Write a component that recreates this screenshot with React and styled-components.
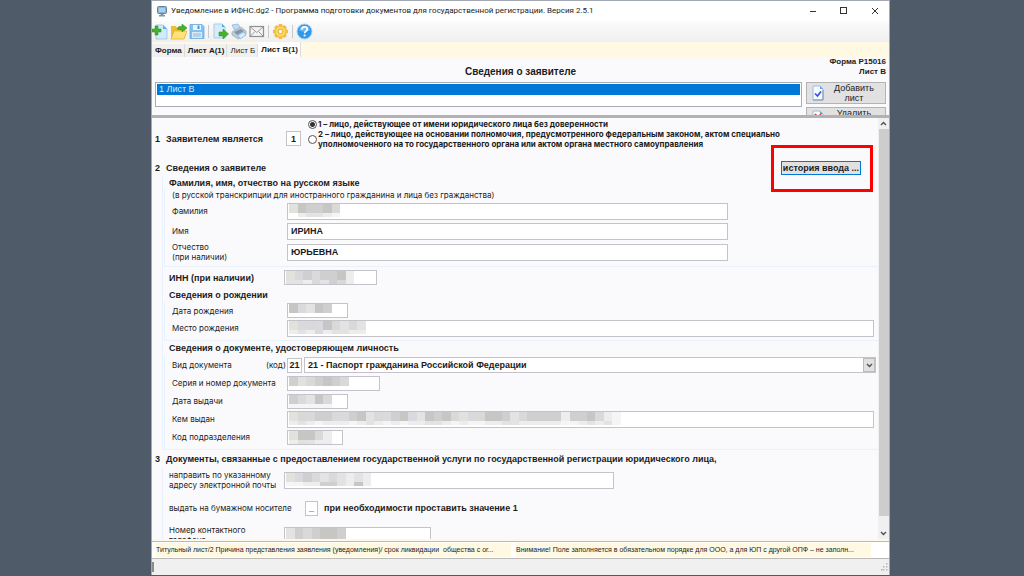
import { useState } from "react";
import styled, { createGlobalStyle, css } from "styled-components";

const GlobalStyle = createGlobalStyle`
  * {
    box-sizing: border-box;
  }
  body {
    margin: 0;
    background-color: #4f5b69;
    font-family: "Liberation Sans", Arial, sans-serif;
    font-size: 8px;
    line-height: 10px;
    color: #1c1c1c;
  }
  button,
  input,
  select {
    margin: 0;
    font-family: inherit;
    color: inherit;
  }
  p,
  h1,
  h2,
  h3 {
    margin: 0;
  }
`;

const Desktop = styled.div`
  display: flex;
  height: 100vh;
  padding: 0 134px 1px 151px;
  background-color: #4f5b69;
`;
const WindowStyle = styled.div`
  flex: 1;
  min-width: 0;
  display: flex;
  flex-direction: column;
  border: 1px solid #a2a8b4;
  border-width: 1px 1px 0 1px;
  background-color: #fafafc;
`;

const TitleBar = styled.header`
  display: flex;
  align-items: center;
  height: 20px;
  padding-left: 5px;
  gap: 4px;
  background-color: #ffffff;
`;
const TitleText = styled.h1`
  flex: 1;
  font-family: Roboto, "Noto Sans", sans-serif;
  font-size: 8px;
  line-height: 12px;
  font-weight: 400;
  white-space: nowrap;
`;
const WindowButton = styled.button`
  display: flex;
  align-items: center;
  justify-content: center;
  width: 27px;
  height: 18px;
  padding: 0;
  border: none;
  background: none;
`;
const WindowButtons = styled.div`
  display: flex;
  gap: 4px;
  padding-right: 1px;
`;

const Toolbar = styled.nav`
  display: flex;
  align-items: center;
  height: 21px;
  gap: 1px;
  background: linear-gradient(#fbfbfb, #efefef);
`;
const ToolButton = styled.button`
  display: flex;
  width: 17px;
  height: 17px;
  padding: 0;
  border: none;
  background: none;
`;
const ToolDivider = styled.span`
  width: 1px;
  height: 13px;
  margin: 0 2px;
  background-color: #c9c9c9;
`;

const TabStrip = styled.div`
  display: flex;
  align-items: flex-end;
  height: 15px;
  background-color: #fff9e3;
`;
const Tab = styled.button`
  height: 13px;
  padding: 0 2px 0 3px;
  border: none;
  border-right: 1px solid #dcdcdc;
  background-color: #f0f0f0;
  font-size: 8px;
  line-height: 13px;
  font-weight: ${(props) => (props.$filled ? 700 : 400)};
  ${(props) =>
    props.$active &&
    css`
      height: 15px;
      background-color: #ffffff;
    `}
`;

const SheetHeader = styled.section`
  height: 58px;
  padding: 0 3px;
  overflow: hidden;
`;
const SheetTitle = styled.div`
  display: grid;
  grid-template-columns: 1fr auto 1fr;
  height: 25px;
  font-weight: 700;
`;
const SheetName = styled.h2`
  grid-column: 2;
  align-self: center;
  padding-top: 4px;
  font-size: 10px;
  line-height: 12px;
`;
const FormCode = styled.p`
  text-align: right;
`;
const SheetBody = styled.div`
  display: grid;
  grid-template-columns: 1fr 80px;
  gap: 4px;
  align-items: start;
`;
const SheetList = styled.ul`
  height: 25px;
  margin: 0;
  padding: 1px;
  border: 1px solid #a9acb5;
  background-color: #ffffff;
  list-style: none;
`;
const SheetItem = styled.li`
  padding-left: 2px;
  background-color: #0078d7;
  color: #d8ecff;
  font-size: 9px;
  line-height: 11px;
`;
const SheetActions = styled.div`
  display: flex;
  flex-direction: column;
  gap: 3px;
`;
const SheetButton = styled.button`
  display: flex;
  align-items: center;
  height: 22px;
  padding: 0 2px 0 4px;
  border: 1px solid #b4b4b6;
  background-color: #e1e1e1;
  font-size: 9px;
  line-height: 10px;

  span {
    flex: 1;
    padding: 0 8px;
  }
`;

const FormArea = styled.main`
  flex: 1;
  min-height: 0;
  display: flex;
  border-top: 3px solid #b2b2b4;
`;
const FormContent = styled.form`
  position: relative;
  flex: 1;
  min-width: 0;
  overflow: hidden;
`;
const ScrollBar = styled.div`
  display: flex;
  flex-direction: column;
  align-items: center;
  width: 11px;
  background-color: #f0f0f0;
`;
const ScrollArrow = styled.button`
  display: flex;
  align-items: center;
  justify-content: center;
  width: 11px;
  height: 11px;
  padding: 0;
  border: none;
  background: none;
`;
const ScrollThumb = styled.div`
  width: 10px;
  height: 92%;
  margin-bottom: auto;
  background-color: #cdcdcd;
`;

const ApplicantRow = styled.div`
  display: grid;
  grid-template-columns: 11px 120px 15px 1fr;
  align-items: center;
  height: 41px;
  padding-left: 3px;
  font-size: 9px;
  font-weight: 700;
`;
const Options = styled.div`
  align-self: start;
  padding: 1px 0 0 7px;
`;
const Option = styled.label`
  display: flex;
  align-items: center;
  gap: 1px;
  max-width: 500px;
  font-family: Inter, "Liberation Sans", sans-serif;
  font-size: 8px;
  line-height: 10px;
  font-weight: 700;
`;
const Radio = styled.input`
  appearance: none;
  flex: none;
  width: 9px;
  height: 9px;
  border: 1px solid #555555;
  border-radius: 50%;
  background-color: #ffffff;

  &:checked {
    background-image: radial-gradient(#333333 0 2px, #ffffff 3px);
  }
`;

const SectionTitle = styled.h2`
  display: grid;
  grid-template-columns: 11px 1fr;
  align-items: center;
  height: 18px;
  padding-left: 3px;
  font-size: 9px;
`;
const SectionBody = styled.div`
  margin-left: 10px;
  padding-left: 1px;
  border-left: 1px solid #e8f1fc;
`;
const GroupTitle = styled.h3`
  padding-left: 5px;
  font-size: 9px;
  line-height: ${(props) => props.$height}px;
`;
const Group = styled.div`
  padding: 0 4px 3px 7px;
  border: 1px solid #e8f1fc;
  border-width: 0 0 1px 1px;
`;
const Note = styled.p`
  font-family: Inter, "Liberation Sans", sans-serif;
  line-height: 12px;
`;
const Row = styled.div`
  display: grid;
  grid-template-columns: 115px 1fr;
  align-items: center;
  height: ${(props) => props.$height}px;
  padding-left: ${(props) => (props.$outer ? 5 : 0)}px;
`;
const Label = styled.label`
  font-family: Inter, "Liberation Sans", sans-serif;
  white-space: pre-line;
`;
const GroupLabel = styled.label`
  font-size: 9px;
  font-weight: 700;
`;
const DocumentRow = styled(Row)`
  grid-template-columns: 94px 21px 15px 1fr;
  margin-right: -2px;
`;
const FieldStyle = styled.div`
  position: relative;
  display: flex;
  width: ${(props) => (props.$width ? props.$width + "px" : "100%")};
`;
const TextInput = styled.input`
  width: 100%;
  height: ${(props) => (props.$low ? 15 : 17)}px;
  padding: 0 3px;
  border: 1px solid #c3c3c9;
  background-color: #ffffff;
  font-size: 9px;
  font-weight: 700;
`;
const CodeInput = styled(TextInput)`
  width: 15px;
  padding: 0;
  text-align: center;
`;
const MosaicStyle = styled.svg`
  position: absolute;
  left: 2px;
  top: 1px;
`;
const PaperRow = styled.div`
  display: flex;
  align-items: center;
  height: 32px;
  padding-left: 5px;

  label {
    width: 136px;
  }
  strong {
    padding-left: 6px;
    font-size: 9px;
  }
`;
const SmallInput = styled(CodeInput)`
  width: 13px;
`;

const SelectStyle = styled.div`
  position: relative;
  display: flex;
  margin-left: 2px;
`;
const Select = styled.select`
  appearance: none;
  width: 100%;
  height: 16px;
  padding: 0 16px 0 3px;
  border: 1px solid #c3c3c9;
  border-radius: 0;
  background-color: #ffffff;
  font-size: 9px;
  font-weight: 700;
`;
const SelectArrow = styled.span`
  position: absolute;
  top: 1px;
  right: 1px;
  display: flex;
  align-items: center;
  justify-content: center;
  width: 12px;
  height: 14px;
  border: 1px solid #bdbdbd;
  background-color: #e1e1e1;
  pointer-events: none;
`;

const Highlight = styled.div`
  position: absolute;
  top: 27px;
  right: 5px;
  padding: 13px 9px 14px 7px;
  border: 3px solid #ff0000;
`;
const HistoryButton = styled.button`
  display: block;
  height: 14px;
  padding: 0 1px;
  border: 1px solid #0078d7;
  background-color: #e1e1e1;
  font-size: 9px;
  line-height: 12px;
  font-weight: 700;
  white-space: nowrap;
`;

const HintArea = styled.footer`
  padding-top: 2px;
  background-color: #fff9e3;
`;
const HintBar = styled.div`
  display: flex;
  gap: 5px;
  height: 18px;
  padding: 1px 18px 1px 4px;
  border: 1px solid #b9b9b9;
  border-width: 1px 0;
  background-color: #ffffff;
`;
const Hint = styled.p`
  flex: 1;
  min-width: 0;
  overflow: hidden;
  white-space: pre;
  background-color: #fff9e3;
  font-size: 7px;
  line-height: 14px;
`;
const StatusBar = styled.div`
  display: flex;
  align-items: center;
  justify-content: space-between;
  height: 16px;
  background-color: #f0f0f0;
`;
const StatusMark = styled.span`
  width: 2px;
  height: 10px;
  background-color: #8c8c8c;
`;

// shades of the hidden values, one letter for each block
const shades = {
  a: "#c6c6c5",
  b: "#cfcfcf",
  c: "#d9d9d9",
  d: "#e3e3e3",
  e: "#ededed",
  f: "#f5f5f5",
  g: "#d8dade",
  h: "#e2e2dd",
};

function Mosaic({ rows }) {
  const cell = 8.5;
  return (
    <MosaicStyle
      width={rows[0].length * cell}
      height="13"
      shapeRendering="crispEdges"
      aria-hidden="true"
    >
      {rows.map((row, y) =>
        row.split("").map((shade, x) =>
          shades[shade] ? (
            <rect
              key={`${y}-${x}`}
              x={x * cell}
              y={y * 9}
              width={cell}
              height={y === 0 ? 9 : 4}
              fill={shades[shade]}
            />
          ) : null
        )
      )}
    </MosaicStyle>
  );
}

function Field({ id, width, low, value = "", hidden }) {
  return (
    <FieldStyle $width={width}>
      <TextInput id={id} type="text" $low={low} defaultValue={value} />
      {hidden && <Mosaic rows={hidden} />}
    </FieldStyle>
  );
}

function Chevron({ up }) {
  return (
    <svg width="7" height="5" viewBox="0 0 7 5" fill="none">
      <path
        d={up ? "M1 4 3.5 1.5 6 4" : "M1 1 3.5 3.5 6 1"}
        stroke="#505050"
        strokeWidth="1.4"
      />
    </svg>
  );
}

function MonitorIcon() {
  return (
    <svg width="10" height="11" viewBox="0 0 10 11">
      <rect x="0.5" y="0.5" width="9" height="7" rx="1" fill="#8fb2d4" stroke="#6d8299" />
      <rect x="2" y="2" width="6" height="4" fill="#9fd4f5" />
      <path d="M3.5 8h3v1h1.5v1.5H2V9h1.5z" fill="#8195a9" />
    </svg>
  );
}

function NewIcon() {
  return (
    <svg width="17" height="17" viewBox="0 0 17 17">
      <path d="M4 2h7l4 4v10H4z" fill="#d3eafa" stroke="#a5cdea" />
      <path d="M11 2v4h4z" fill="#5fb0e6" />
      <path d="M3 3h3v3h3v3H6v3H3V9H0V6h3z" fill="#3fb52e" stroke="#2a8d1d" strokeWidth="0.5" />
    </svg>
  );
}

function OpenIcon() {
  return (
    <svg width="17" height="17" viewBox="0 0 17 17">
      <path d="M1 3h5l1 2h8v10H1z" fill="#eebd34" />
      <path d="M4 8h13l-3 8H1z" fill="#ffe27a" stroke="#e2ac22" strokeWidth="0.7" />
      <path d="M7 6c1-2.500 3-3 5-2.500V1l5 4-5 4V7c-2-.5-3.500-.5-5-1z" fill="#43b32f" stroke="#2a8d1d" strokeWidth="0.5" />
    </svg>
  );
}

function SaveIcon() {
  return (
    <svg width="17" height="17" viewBox="0 0 17 17">
      <path d="M2 1.500h12l2 2V15.500H2z" fill="#86c0ee" stroke="#6aa9de" strokeWidth="0.8" />
      <rect x="5" y="2" width="8" height="5" fill="#eaf5fd" />
      <rect x="9.500" y="2.500" width="2" height="3.500" fill="#4c93cf" />
      <rect x="4" y="9" width="10" height="6" fill="#d9ebf9" />
      <path d="M5 11h8M5 13h8" stroke="#8dbbe0" />
    </svg>
  );
}

function ExportIcon() {
  return (
    <svg width="17" height="17" viewBox="0 0 17 17">
      <path d="M2 1h8l3 3v11H2z" fill="#d8ebfa" stroke="#a5cdea" />
      <path d="M10 1v3h3z" fill="#4fa5e0" />
      <path d="M7 9h4V6l5.500 5L11 16v-3H7z" fill="#43b32f" stroke="#2a8d1d" strokeWidth="0.5" />
    </svg>
  );
}

function PrintIcon() {
  return (
    <svg width="17" height="17" viewBox="0 0 17 17">
      <path d="M2 2l6-1 3 5-6 2z" fill="#bcdcf5" stroke="#82b3da" strokeWidth="0.7" />
      <path d="M2 9l9-5 5 4v3l-8 5-6-4z" fill="#c3ccd6" stroke="#98a6b6" strokeWidth="0.7" />
      <path d="M4 9l7-3 3 2-7 4z" fill="#8595a8" />
      <path d="M8 12l6-3 2 3-6 4z" fill="#d8edfc" stroke="#7aaedb" strokeWidth="0.7" />
    </svg>
  );
}

function MailIcon() {
  return (
    <svg width="17" height="17" viewBox="0 0 17 17" fill="none" stroke="#8f8f8f" strokeWidth="1.2">
      <rect x="2" y="3.500" width="13.500" height="10" fill="#f4f4f4" />
      <path d="M2.500 4l6.300 5.500L15 4M2.500 13l4.500-4.500M15 13l-4.500-4.500" strokeWidth="0.9" />
    </svg>
  );
}

function GearIcon() {
  return (
    <svg width="17" height="17" viewBox="0 0 17 17">
      {[0, 45, 90, 135].map((angle) => (
        <rect
          key={angle}
          x="6.500"
          y="1"
          width="4"
          height="15"
          rx="1"
          fill="#f3bd3c"
          transform={`rotate(${angle} 8.500 8.500)`}
        />
      ))}
      <circle cx="8.500" cy="8.500" r="5.500" fill="#fbd565" stroke="#edb63a" strokeWidth="0.8" />
      <circle cx="8.500" cy="8.500" r="2.300" fill="#f7f4ea" stroke="#dfa322" strokeWidth="0.8" />
    </svg>
  );
}

function HelpIcon() {
  return (
    <svg width="17" height="17" viewBox="0 0 17 17">
      <circle cx="8.500" cy="8.500" r="7.500" fill="#3297e6" stroke="#a9d1f2" />
      <path d="M3 7a5.700 5.700 0 0 1 11 0c-3 2-8 2-11 0z" fill="#6bbaf3" />
      <path
        d="M6 6.500c0-3.500 5.200-3.200 5.200-.3 0 2-2.600 2-2.600 4"
        fill="none"
        stroke="#ffffff"
        strokeWidth="1.7"
      />
      <circle cx="8.600" cy="12.500" r="1.100" fill="#ffffff" />
    </svg>
  );
}

function PageIcon() {
  return (
    <svg width="14" height="16" viewBox="0 0 14 16">
      <path d="M2 1h7l3 3v11H2z" fill="#f5faff" stroke="#9dbbe0" />
      <path d="M9 1v3h3z" fill="#5ea7e5" />
      <path d="M2 15h10V5" fill="none" stroke="#7f95ad" />
      <path d="M4 8.500l2.500 2.500L10 6.500" fill="none" stroke="#3a4fe0" strokeWidth="1.700" />
    </svg>
  );
}

function RemovePageIcon() {
  return (
    <svg width="14" height="16" viewBox="0 0 14 16">
      <path d="M2 1h7l3 3v11H2z" fill="#f5faff" stroke="#9dbbe0" />
      <path d="M9 1v3h3z" fill="#5ea7e5" />
      <path d="M4 4l6 7M10 4l-6 7" fill="none" stroke="#e03a3a" strokeWidth="1.700" />
    </svg>
  );
}

const tools = [
  { name: "Создать", icon: <NewIcon /> },
  { name: "Открыть", icon: <OpenIcon /> },
  { name: "Сохранить", icon: <SaveIcon />, last: true },
  { name: "Экспорт", icon: <ExportIcon /> },
  { name: "Печать", icon: <PrintIcon /> },
  { name: "Отправить", icon: <MailIcon />, last: true },
  { name: "Настройки", icon: <GearIcon />, last: true },
  { name: "Справка", icon: <HelpIcon /> },
];

const tabs = [
  { name: "Форма", filled: true },
  { name: "Лист А(1)", filled: true },
  { name: "Лист Б", filled: false },
  { name: "Лист В(1)", filled: true },
];

function ToolItem({ tool }) {
  return (
    <>
      <ToolButton aria-label={tool.name}>{tool.icon}</ToolButton>
      {tool.last && <ToolDivider />}
    </>
  );
}

function App() {
  const [activeTab, setActiveTab] = useState("Лист В(1)");
  const [applicant, setApplicant] = useState("1");

  return (
    <>
      <GlobalStyle />
      <Desktop>
        <WindowStyle>
          <TitleBar>
            <MonitorIcon />
            <TitleText>
              Уведомление в ИФНС.dg2 - Программа подготовки документов для
              государственной регистрации. Версия 2.5.1
            </TitleText>
            <WindowButtons>
              <WindowButton aria-label="Свернуть">
                <svg width="8" height="8">
                  <path d="M1 4.500h6" stroke="#333333" />
                </svg>
              </WindowButton>
              <WindowButton aria-label="Развернуть">
                <svg width="8" height="8">
                  <rect x="0.500" y="0.500" width="6" height="6" fill="none" stroke="#333333" />
                </svg>
              </WindowButton>
              <WindowButton aria-label="Закрыть">
                <svg width="8" height="8">
                  <path d="M1 1l6 6M7 1L1 7" stroke="#333333" />
                </svg>
              </WindowButton>
            </WindowButtons>
          </TitleBar>

          <Toolbar>
            {tools.map((tool) => (
              <ToolItem key={tool.name} tool={tool} />
            ))}
          </Toolbar>

          <TabStrip>
            {tabs.map((tab) => (
              <Tab
                key={tab.name}
                $filled={tab.filled}
                $active={tab.name === activeTab}
                onClick={() => {
                  setActiveTab(tab.name);
                }}
              >
                {tab.name}
              </Tab>
            ))}
          </TabStrip>

          <SheetHeader>
            <SheetTitle>
              <SheetName>Сведения о заявителе</SheetName>
              <FormCode>
                Форма Р15016
                <br />
                Лист В
              </FormCode>
            </SheetTitle>
            <SheetBody>
              <SheetList>
                <SheetItem>1 Лист В</SheetItem>
              </SheetList>
              <SheetActions>
                <SheetButton>
                  <PageIcon />
                  <span>Добавить лист</span>
                </SheetButton>
                <SheetButton>
                  <RemovePageIcon />
                  <span>Удалить лист</span>
                </SheetButton>
              </SheetActions>
            </SheetBody>
          </SheetHeader>

          <FormArea>
            <FormContent>
              <ApplicantRow>
                <span>1</span>
                <label htmlFor="applicant">Заявителем является</label>
                <CodeInput
                  id="applicant"
                  $low
                  value={applicant}
                  onChange={(event) => {
                    setApplicant(event.target.value);
                  }}
                />
                <Options>
                  <Option>
                    <Radio
                      type="radio"
                      name="kind"
                      checked={applicant === "1"}
                      onChange={() => setApplicant("1")}
                    />
                    1 – лицо, действующее от имени юридического лица без
                    доверенности
                  </Option>
                  <Option>
                    <Radio
                      type="radio"
                      name="kind"
                      checked={applicant === "2"}
                      onChange={() => setApplicant("2")}
                    />
                    2 – лицо, действующее на основании полномочия,
                    предусмотренного федеральным законом, актом специально
                    уполномоченного на то государственного органа или актом
                    органа местного самоуправления
                  </Option>
                </Options>
              </ApplicantRow>

              <SectionTitle>
                <span>2</span>Сведения о заявителе
              </SectionTitle>
              <SectionBody>
                <GroupTitle $height={12}>
                  Фамилия, имя, отчество на русском языке
                </GroupTitle>
                <Group>
                  <Note>
                    (в русской транскрипции для иностранного гражданина и лица
                    без гражданства)
                  </Note>
                  <Row $height={20}>
                    <Label htmlFor="surname">Фамилия</Label>
                    <Field id="surname" width={441} hidden={["habbac", " eddef"]} />
                  </Row>
                  <Row $height={20}>
                    <Label htmlFor="name">Имя</Label>
                    <Field id="name" width={441} value="ИРИНА" />
                  </Row>
                  <Row $height={22}>
                    <Label htmlFor="patronymic">{"Отчество\n(при наличии)"}</Label>
                    <Field id="patronymic" width={441} value="ЮРЬЕВНА" />
                  </Row>
                </Group>

                <Row $height={21} $outer>
                  <GroupLabel htmlFor="inn">ИНН (при наличии)</GroupLabel>
                  <Field id="inn" low width={93} hidden={["hcbgbbae", "ddecdbce"]} />
                </Row>

                <GroupTitle $height={14}>Сведения о рождении</GroupTitle>
                <Group>
                  <Row $height={17}>
                    <Label htmlFor="birthday">Дата рождения</Label>
                    <Field id="birthday" low width={61} hidden={["agdab"]} />
                  </Row>
                  <Row $height={18}>
                    <Label htmlFor="birthplace">Место рождения</Label>
                    <Field id="birthplace" hidden={["hgcgacdcd", "edegeddee"]} />
                  </Row>
                </Group>

                <GroupTitle $height={15}>
                  Сведения о документе, удостоверяющем личность
                </GroupTitle>
                <Group>
                  <DocumentRow $height={18}>
                    <Label htmlFor="document">Вид документа</Label>
                    <Label htmlFor="code">(код)</Label>
                    <CodeInput id="code" $low defaultValue="21" />
                    <SelectStyle>
                      <Select id="document" defaultValue="21">
                        <option value="21">
                          21 - Паспорт гражданина Российской Федерации
                        </option>
                      </Select>
                      <SelectArrow>
                        <Chevron />
                      </SelectArrow>
                    </SelectStyle>
                  </DocumentRow>
                  <Row $height={18}>
                    <Label htmlFor="series">Серия и номер документа</Label>
                    <Field id="series" low width={93} hidden={["bhcbabc"]} />
                  </Row>
                  <Row $height={18}>
                    <Label htmlFor="issued">Дата выдачи</Label>
                    <Field id="issued" low width={61} hidden={["bgdac", "fffff"]} />
                  </Row>
                  <Row $height={18}>
                    <Label htmlFor="issuer">Кем выдан</Label>
                    <Field
                      id="issuer"
                      hidden={[
                        "hccbbcgbadcgbagdabachgcaabdcbbbbebbacef",
                        "edefeeefedefefeeddefeffeeddeeeeeffededf",
                      ]}
                    />
                  </Row>
                  <Row $height={18}>
                    <Label htmlFor="department">Код подразделения</Label>
                    <Field id="department" low width={56} hidden={["haace", "ehdee"]} />
                  </Row>
                </Group>
              </SectionBody>

              <SectionTitle>
                <span>3</span>Документы, связанные с предоставлением
                государственной услуги по государственной регистрации
                юридического лица,
              </SectionTitle>
              <SectionBody>
                <Row $height={24} $outer>
                  <Label htmlFor="email">
                    {"направить по указанному\nадресу электронной почты"}
                  </Label>
                  <Field id="email" width={330} hidden={["hgbcdcdede", "ffeebbdeae"]} />
                </Row>
                <PaperRow>
                  <Label htmlFor="paper">выдать на бумажном носителе</Label>
                  <SmallInput id="paper" $low defaultValue="_" />
                  <strong>при необходимости проставить значение 1</strong>
                </PaperRow>
                <Row $height={22} $outer>
                  <Label htmlFor="phone">{"Номер контактного\nтелефона"}</Label>
                  <Field id="phone" width={147} hidden={["dbcbaab", "dbcbaab"]} />
                </Row>
              </SectionBody>

              <Highlight>
                <HistoryButton type="button">история ввода ...</HistoryButton>
              </Highlight>
            </FormContent>
            <ScrollBar>
              <ScrollArrow aria-label="Вверх">
                <Chevron up />
              </ScrollArrow>
              <ScrollThumb />
              <ScrollArrow aria-label="Вниз">
                <Chevron />
              </ScrollArrow>
            </ScrollBar>
          </FormArea>

          <HintArea>
            <HintBar>
              <Hint>
                {
                  "Титульный лист/2 Причина представления заявления (уведомления)/ срок ликвидации  общества с ог..."
                }
              </Hint>
              <Hint>
                {
                  "Внимание! Поле заполняется в обязательном порядке для ООО, а для ЮП с другой ОПФ – не заполн..."
                }
              </Hint>
            </HintBar>
          </HintArea>
          <StatusBar>
            <StatusMark />
            <svg width="8" height="8" fill="#b5b5b5">
              {[[5, 0], [5, 3], [2, 3], [5, 6], [2, 6], [0, 6]].map(([x, y]) => (
                <rect key={`${x}-${y}`} x={x} y={y} width="1.500" height="1.500" />
              ))}
            </svg>
          </StatusBar>
        </WindowStyle>
      </Desktop>
    </>
  );
}

export default App;
